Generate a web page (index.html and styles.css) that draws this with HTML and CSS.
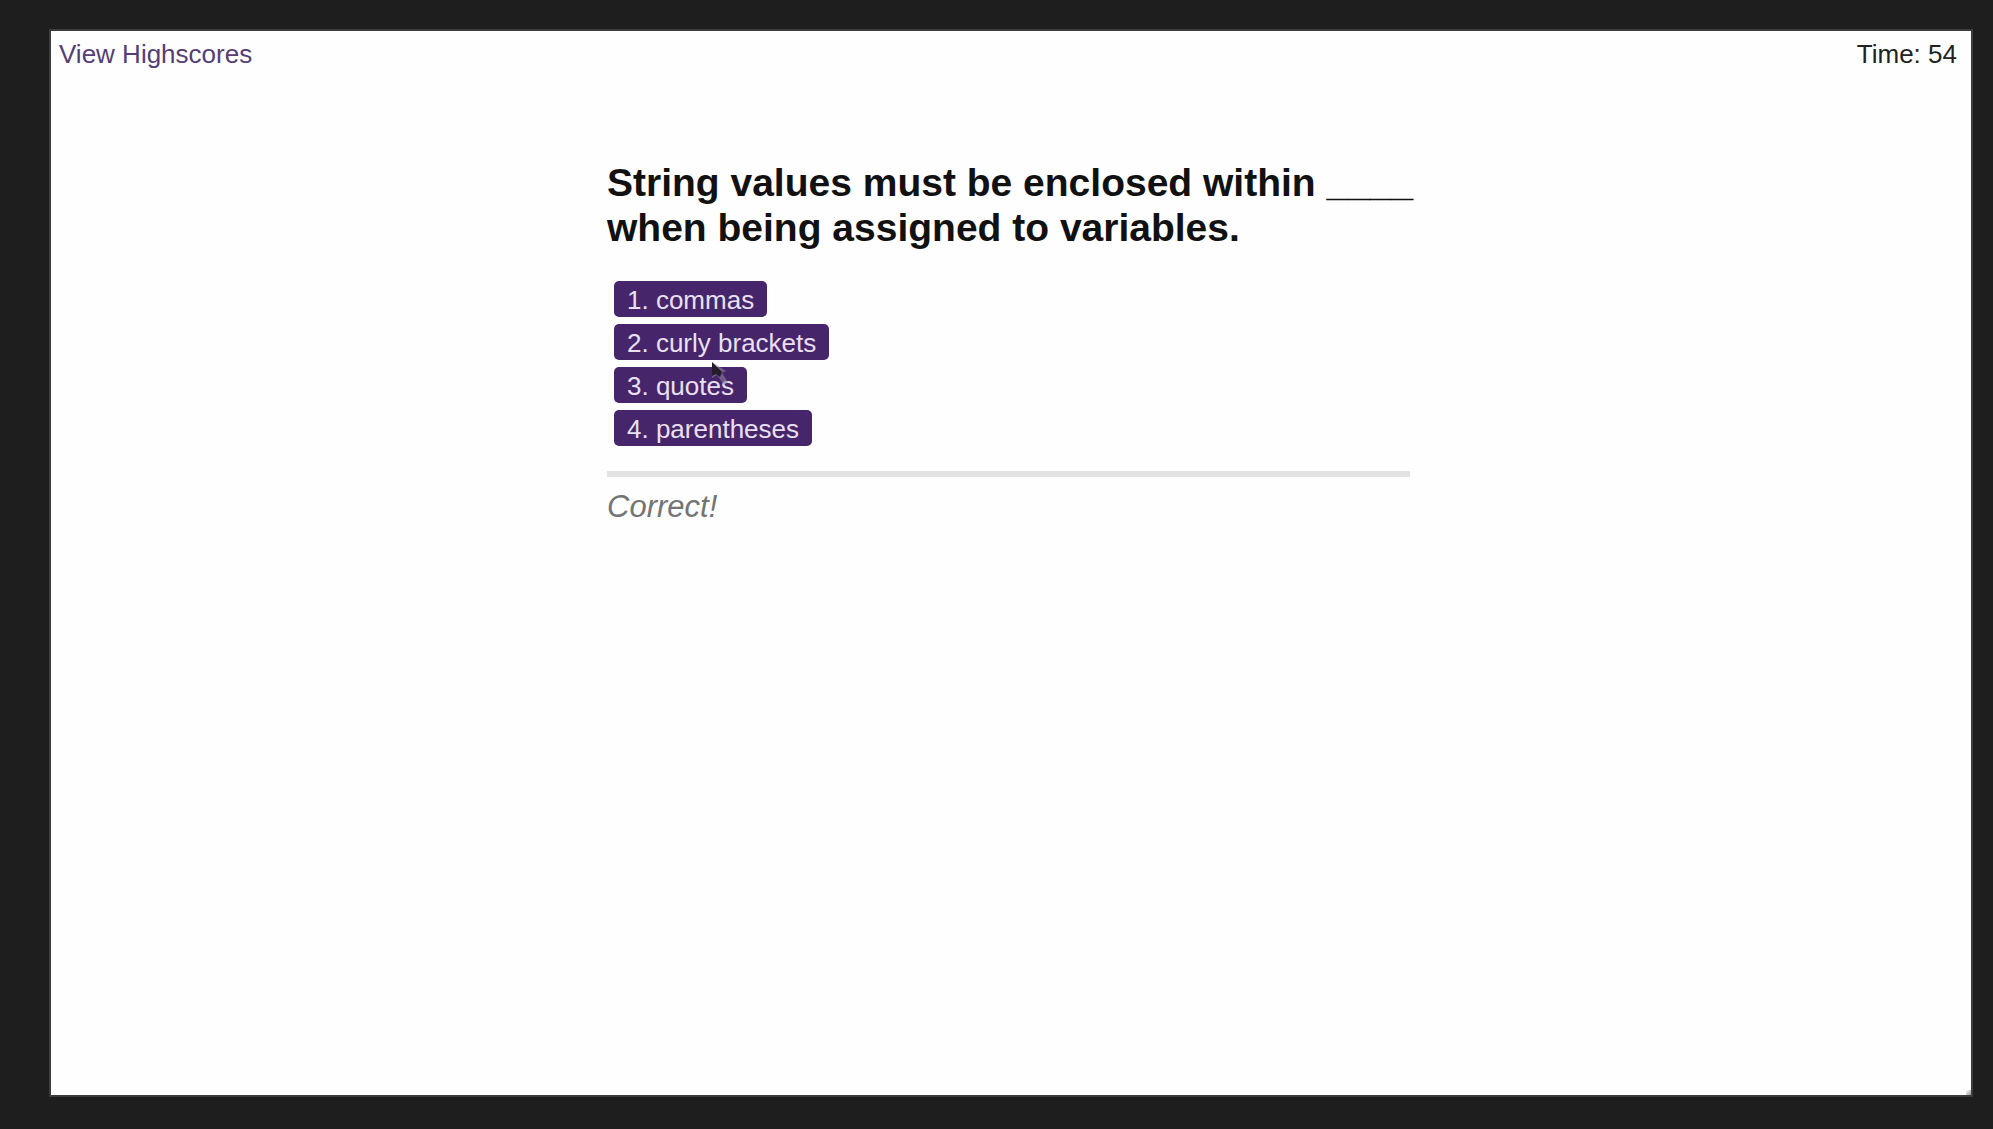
FILE: index.html
```html
<!DOCTYPE html>
<html lang="en">
<head>
<meta charset="utf-8">
<meta name="viewport" content="width=device-width, initial-scale=1">
<title>Coding Quiz</title>
<link rel="stylesheet" href="styles.css">
</head>
<body>
<div class="window">
  <header class="topbar">
    <a class="scores-link" href="#highscores">View Highscores</a>
    <div class="timer">Time: <span>54</span></div>
  </header>
  <main class="quiz">
    <h1 class="question">String values must be enclosed within ____ when being assigned to variables.</h1>
    <div class="choices">
      <button class="choice" type="button">1. commas</button>
      <button class="choice" type="button">2. curly brackets</button>
      <button class="choice" type="button">3. quotes
        <svg class="pointer" width="20" height="26" viewBox="0 0 20 26" aria-hidden="true">
          <path d="M2 1V17L7 14L14 24L18 21L12 12L16 10Z" fill="#8d819b" opacity=".6"/>
          <path d="M2 1V15L6 13L10 16L12 11Z" fill="#211d29"/>
        </svg>
      </button>
      <button class="choice" type="button">4. parentheses</button>
    </div>
    <p class="feedback">Correct!</p>
  </main>
  <span class="grip"></span>
</div>
</body>
</html>
```
FILE: styles.css
```css
* {
  box-sizing: border-box;
}

body {
  margin: 0;
  min-height: 100vh;
  display: flex;
  padding: 29px 20px 32px 49px;
  background: #1e1e1e;
  font-family: "Liberation Sans", Arial, sans-serif;
  font-size: 26px;
  line-height: 30px;
}

.window {
  position: relative;
  flex: 1;
  border: 2px solid #3c3c3c;
  background: #fefefe;
}

.topbar {
  display: flex;
  justify-content: space-between;
  padding: 8px 14px 0 8px;
}

.scores-link {
  color: #563d75;
  text-decoration: none;
}

.timer {
  color: #222;
}

.quiz {
  max-width: 808px;
  margin: 91px auto 0;
}

.question {
  margin: 0;
  color: #111;
  font-size: 39px;
  line-height: 45px;
}

.choices {
  display: flex;
  flex-direction: column;
  align-items: flex-start;
  gap: 7px;
  margin: 31px 0 25px 7px;
}

.choice {
  position: relative;
  height: 36px;
  padding: 2px 13px 0;
  border: 0;
  border-radius: 5px;
  background: #46256b;
  color: #e9e0f2;
  font: inherit;
}

.pointer {
  position: absolute;
  top: -6px;
  right: 17px;
}

.feedback {
  margin: 0 5px 0 0;
  padding-top: 12px;
  border-top: 6px solid #e3e3e3;
  color: #747474;
  font-size: 31px;
  font-style: italic;
  line-height: 36px;
}

.grip {
  position: absolute;
  right: 0;
  bottom: 0;
  width: 5px;
  height: 5px;
  background: linear-gradient(135deg, #fefefe, #999);
}
```
